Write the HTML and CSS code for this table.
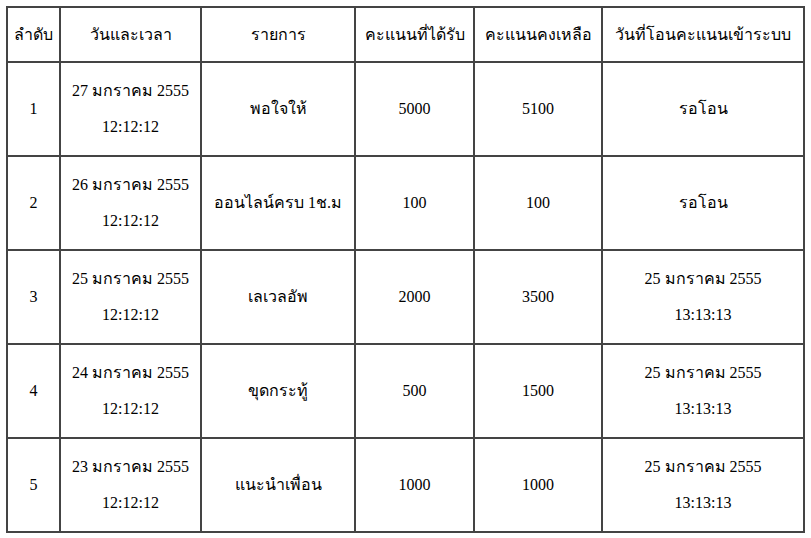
FILE: index.html
```html
<!DOCTYPE html>
<html lang="th">
<head>
<meta charset="utf-8">
<title>ประวัติคะแนน</title>
<link rel="stylesheet" href="styles.css">
</head>
<body>
<table class="points">
  <thead>
    <tr>
      <th class="c1">ลำดับ</th>
      <th class="c2">วันและเวลา</th>
      <th class="c3">รายการ</th>
      <th class="c4">คะแนนที่ได้รับ</th>
      <th class="c5">คะแนนคงเหลือ</th>
      <th class="c6">วันที่โอนคะแนนเข้าระบบ</th>
    </tr>
  </thead>
  <tbody>
    <tr>
      <td>1</td>
      <td>27 มกราคม 2555<br>12:12:12</td>
      <td>พอใจให้</td>
      <td>5000</td>
      <td>5100</td>
      <td>รอโอน</td>
    </tr>
    <tr>
      <td>2</td>
      <td>26 มกราคม 2555<br>12:12:12</td>
      <td>ออนไลน์ครบ 1ช.ม</td>
      <td>100</td>
      <td>100</td>
      <td>รอโอน</td>
    </tr>
    <tr>
      <td>3</td>
      <td>25 มกราคม 2555<br>12:12:12</td>
      <td>เลเวลอัพ</td>
      <td>2000</td>
      <td>3500</td>
      <td>25 มกราคม 2555<br>13:13:13</td>
    </tr>
    <tr>
      <td>4</td>
      <td>24 มกราคม 2555<br>12:12:12</td>
      <td>ขุดกระทู้</td>
      <td>500</td>
      <td>1500</td>
      <td>25 มกราคม 2555<br>13:13:13</td>
    </tr>
    <tr>
      <td>5</td>
      <td>23 มกราคม 2555<br>12:12:12</td>
      <td>แนะนำเพื่อน</td>
      <td>1000</td>
      <td>1000</td>
      <td>25 มกราคม 2555<br>13:13:13</td>
    </tr>
  </tbody>
</table>
</body>
</html>
```

FILE: styles.css
```css
html, body {
  margin: 0;
  padding: 0;
  background: #ffffff;
}

.points {
  margin: 6px;
  width: 799px;
  table-layout: fixed;
  border-collapse: separate;
  border-spacing: 0;
  border-top: 2px solid #444444;
  border-left: 2px solid #444444;
  font-family: "Liberation Serif", "Times New Roman", serif;
  font-size: 16px;
  color: #000000;
}

.points th,
.points td {
  box-sizing: border-box;
  border-right: 2px solid #444444;
  border-bottom: 2px solid #444444;
  padding: 0;
  text-align: center;
  vertical-align: middle;
  font-weight: normal;
  line-height: 36px;
}

.points thead tr {
  height: 55px;
}

.points tbody tr {
  height: 94px;
}

.c1 { width: 53px; }
.c2 { width: 141px; }
.c3 { width: 154px; }
.c4 { width: 119px; }
.c5 { width: 128px; }
.c6 { width: 202px; }
```
